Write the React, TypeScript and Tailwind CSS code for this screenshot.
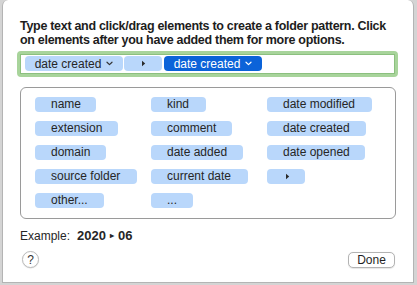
import React from 'react';

const font = { fontFamily: '"Liberation Sans", Arial, sans-serif' };

function Chevron({ color }: { color: string }) {
  return (
    <svg width="7" height="5" viewBox="0 0 7 5" className="ml-[5px]">
      <path d="M1 1.2 L3.5 3.6 L6 1.2" fill="none" stroke={color} strokeWidth="1.2" strokeLinecap="round" strokeLinejoin="round" />
    </svg>
  );
}

function Arrow() {
  return (
    <svg width="5" height="7" viewBox="0 0 5 7">
      <path d="M1 0.8 L4.2 3.5 L1 6.2 Z" fill="#2a2a2a" />
    </svg>
  );
}

function Token({ label, w, arrow }: { label?: string; w: number; arrow?: boolean }) {
  return (
    <div
      className="h-[15px] rounded-[4px] bg-[#b9d7fb] flex items-center pl-[16px] text-[12px] leading-[15px] text-[#262626]"
      style={{ width: w }}
    >
      {arrow ? <div className="pl-[2px]"><Arrow /></div> : label}
    </div>
  );
}

const palette: { label?: string; w: number; arrow?: boolean }[] = [
  { label: 'name', w: 61 },
  { label: 'kind', w: 55 },
  { label: 'date modified', w: 105 },
  { label: 'extension', w: 83 },
  { label: 'comment', w: 81 },
  { label: 'date created', w: 99 },
  { label: 'domain', w: 71 },
  { label: 'date added', w: 92 },
  { label: 'date opened', w: 98 },
  { label: 'source folder', w: 102 },
  { label: 'current date', w: 97 },
  { w: 38, arrow: true },
  { label: 'other...', w: 69 },
  { label: '...', w: 42 },
];

export default function App() {
  return (
    <div className="w-[417px] h-[285px] bg-[#d4d4d4] flex" style={font}>
      <div className="ml-[2px] w-[412px] h-[283px] bg-white border-x border-b border-[#b4b4b4] rounded-t-[6px] flex flex-col pl-[17px] pt-[19px]">
        {/* Instructions */}
        <p className="w-[385px] text-[12.5px] leading-[14px] tracking-[-0.3px] font-bold text-[#1d1d1d]">
          Type text and click/drag elements to create a folder pattern. Click
          <br />
          on elements after you have added them for more options.
        </p>

        {/* Token field */}
        <div className="mt-[4px] -ml-[3px] w-[381px] h-[26px] rounded-[4px] border-[3px] border-[#a8d49b] bg-white">
          <div className="h-full border border-[#8cc07f] flex items-start pl-[4px] pt-[1px] gap-[1px]">
            <div className="h-[15px] w-[98px] rounded-[4px] bg-[#b9d7fb] flex items-center justify-center text-[12px] text-[#262626]">
              date created<Chevron color="#333" />
            </div>
            <div className="h-[15px] w-[38px] rounded-[4px] bg-[#b9d7fb] flex items-center justify-center">
              <Arrow />
            </div>
            <div className="ml-[1px] h-[15px] w-[98px] rounded-[4px] bg-[#0b63d9] flex items-center justify-center text-[12px] text-white">
              date created<Chevron color="#fff" />
            </div>
          </div>
        </div>

        {/* Element palette */}
        <div className="mt-[10px] w-[376px] h-[132px] rounded-[6px] border border-[#9a9a9a] pl-[14px] pt-[9px]">
          <div className="grid grid-cols-[116px_116px_116px] gap-y-[9px]">
            {palette.map((t, i) => (
              <Token key={i} label={t.label} w={t.w} arrow={t.arrow} />
            ))}
          </div>
        </div>

        {/* Example */}
        <div className="mt-[10px] h-[14px] flex items-center text-[12px] text-[#262626]">
          <span className="w-[57px]">Example:</span>
          <span className="font-bold text-[13px] flex items-center gap-[4px]">
            2020 <span className="text-[8px]">▸</span> 06
          </span>
        </div>

        {/* Buttons */}
        <div className="mt-[8px] w-[375px] flex items-center justify-between">
          <div className="ml-[2px] w-[17px] h-[17px] rounded-full border border-[#bdbdbd] bg-white shadow-[0_0.5px_1px_rgba(0,0,0,0.15)] flex items-center justify-center text-[12px] text-[#333]">
            ?
          </div>
          <div className="w-[47px] h-[16px] rounded-[5px] border border-[#b3b3b3] bg-white shadow-[0_0.5px_1px_rgba(0,0,0,0.1)] flex items-center justify-center text-[12px] text-[#1f1f1f]">
            Done
          </div>
        </div>
      </div>
    </div>
  );
}
